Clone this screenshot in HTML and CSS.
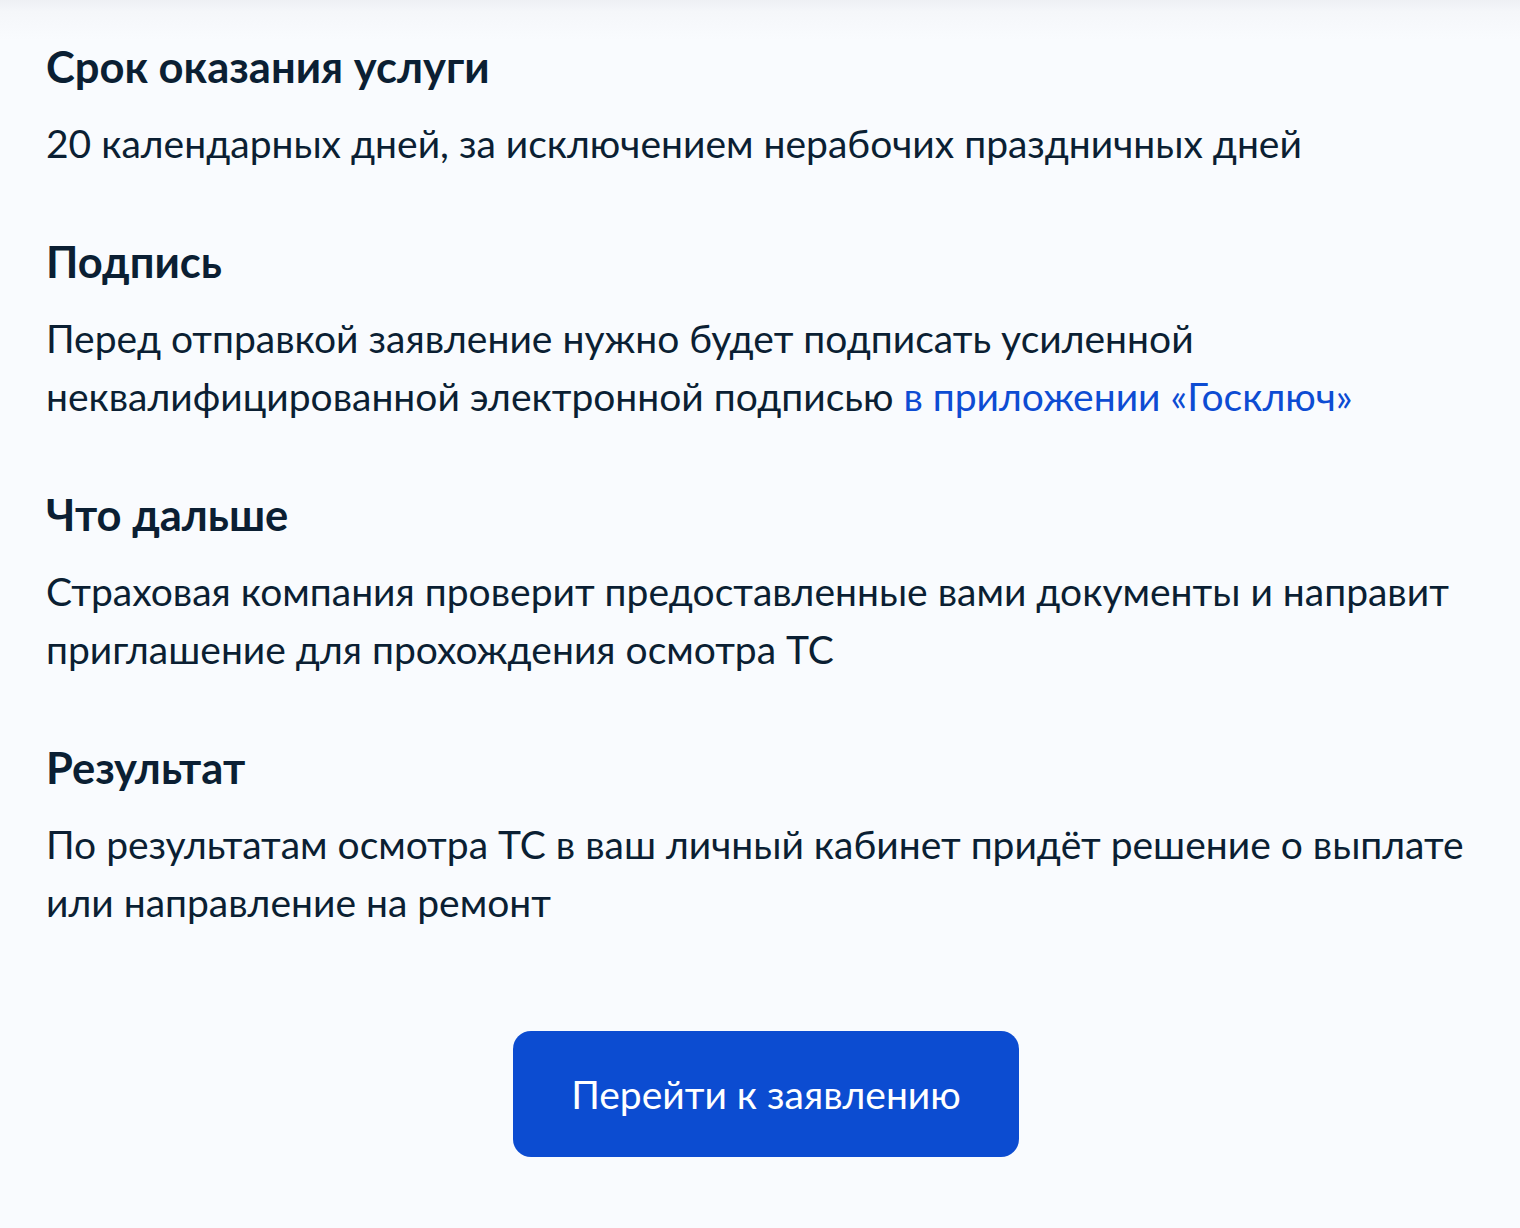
FILE: index.html
```html
<!DOCTYPE html>
<html lang="ru">
<head>
<meta charset="utf-8">
<title>Услуга</title>
<link rel="stylesheet" href="styles.css">
</head>
<body>
<div class="page">
  <section class="block">
    <h2 class="title">Срок оказания услуги</h2>
    <p class="text">20 календарных дней, за исключением нерабочих праздничных дней</p>
  </section>
  <section class="block">
    <h2 class="title">Подпись</h2>
    <p class="text">Перед отправкой заявление нужно будет подписать усиленной<br>неквалифицированной электронной подписью <a class="link" href="#">в приложении «Госключ»</a></p>
  </section>
  <section class="block">
    <h2 class="title">Что дальше</h2>
    <p class="text">Страховая компания проверит предоставленные вами документы и направит<br>приглашение для прохождения осмотра ТС</p>
  </section>
  <section class="block">
    <h2 class="title">Результат</h2>
    <p class="text">По результатам осмотра ТС в ваш личный кабинет придёт решение о выплате<br>или направление на ремонт</p>
  </section>
  <div class="actions">
    <button class="btn" type="button">Перейти к заявлению</button>
  </div>
</div>
</body>
</html>
```

FILE: styles.css
```css
html, body {
  margin: 0;
  padding: 0;
}
body {
  background: #f9fbfe;
  font-family: Lato, "Noto Sans", sans-serif;
  color: #0b1f33;
  min-height: 1228px;
}
.page {
  min-height: 1228px;
  box-sizing: border-box;
  padding: 41px 46px 0 46px;
  background: linear-gradient(180deg, #eef0f4 0px, #f5f7fa 12px, #f9fbfe 40px);
  display: flex;
  flex-direction: column;
  gap: 64px;
}
.block {
  display: flex;
  flex-direction: column;
  gap: 23px;
}
.title {
  margin: 0;
  font-size: 43.5px;
  line-height: 50px;
  font-weight: 700;
}
.text {
  margin: 0;
  font-size: 39px;
  line-height: 58px;
  font-weight: 400;
}
.link {
  color: #0d4cd3;
  text-decoration: none;
}
.actions {
  display: flex;
  justify-content: center;
  padding-top: 36px;
  padding-left: 12px;
}
.btn {
  width: 506px;
  height: 126px;
  border: none;
  border-radius: 18px;
  background: #0c4cd1;
  color: #ffffff;
  font-family: Lato, "Noto Sans", sans-serif;
  font-size: 39px;
  font-weight: 400;
  cursor: pointer;
}
```
